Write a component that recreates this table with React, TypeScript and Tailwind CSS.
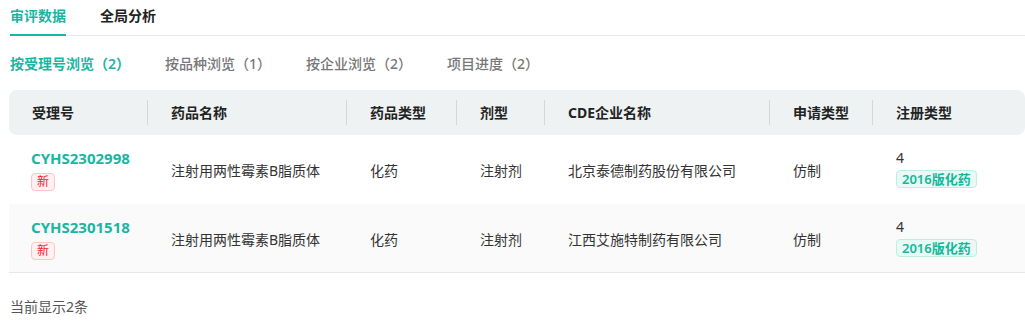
import React, { useState } from "react"

interface Row {
  code: string
  name: string
  drugType: string
  form: string
  company: string
  applyType: string
  regType: string
  regTag: string
}

const rows: Row[] = [
  {
    code: "CYHS2302998",
    name: "注射用两性霉素B脂质体",
    drugType: "化药",
    form: "注射剂",
    company: "北京泰德制药股份有限公司",
    applyType: "仿制",
    regType: "4",
    regTag: "2016版化药",
  },
  {
    code: "CYHS2301518",
    name: "注射用两性霉素B脂质体",
    drugType: "化药",
    form: "注射剂",
    company: "江西艾施特制药有限公司",
    applyType: "仿制",
    regType: "4",
    regTag: "2016版化药",
  },
]

const columns = ["受理号", "药品名称", "药品类型", "剂型", "CDE企业名称", "申请类型", "注册类型"]

const gridCols = "grid grid-cols-[139px_199px_110px_88px_225px_103px_1fr]"

const subTabs = ["按受理号浏览（2）", "按品种浏览（1）", "按企业浏览（2）", "项目进度（2）"]

export default function App() {
  const [tab, setTab] = useState(0)
  const [subTab, setSubTab] = useState(0)

  return (
    <div
      className="h-[332px] w-[1025px] overflow-hidden bg-white text-sm text-[#333]"
      style={{ fontFamily: '"Noto Sans", "Noto Sans CJK SC", sans-serif' }}
    >
      {/* top tabs */}
      <div className="ml-[10px] flex h-9 gap-[34px] border-b border-[#e8e8ec]">
        {["审评数据", "全局分析"].map((t, i) => (
          <button
            key={t}
            onClick={() => setTab(i)}
            className={
              "-mb-px border-b-2 pb-[2px] text-sm font-semibold " +
              (tab === i ? "border-[#1ab5a3] text-[#1ab5a3]" : "border-transparent text-[#222]")
            }
          >
            {t}
          </button>
        ))}
      </div>

      {/* sub tabs */}
      <div className="ml-[10px] mt-[17px] flex h-[22px] items-center gap-[35px]">
        {subTabs.map((t, i) => (
          <button
            key={t}
            onClick={() => setSubTab(i)}
            className={
              "text-sm " +
              (subTab === i ? "font-semibold text-[#1ab5a3]" : "font-medium text-[#777]")
            }
          >
            {t}
          </button>
        ))}
      </div>

      {/* table */}
      <div className="ml-[9px] mt-[15px]">
        <div className={gridCols + " h-[45px] items-center rounded-lg bg-[#eef2f3]"}>
          {columns.map((c, i) => (
            <div
              key={c}
              className={
                "flex h-[25px] items-center pl-[23px] font-bold text-[#222] " +
                (i < columns.length - 1 ? "border-r border-[#d3d8db]" : "")
              }
            >
              {c}
            </div>
          ))}
        </div>

        {rows.map((r, idx) => (
          <div
            key={r.code}
            className={
              gridCols +
              " h-[69px] items-center border-b " +
              (idx % 2 === 1 ? "border-[#e8e8e8] bg-[#fafafa]" : "border-white bg-white")
            }
          >
            <div className="flex flex-col items-start pl-[22px]">
              <span className="text-[15px] font-bold leading-5 text-[#1ab5a3]">{r.code}</span>
              <span className="mt-[5px] flex h-[18px] items-center rounded-sm border border-[#ffc4c4] bg-[#fff1f0] px-[5px] text-xs text-[#f5222d]">
                新
              </span>
            </div>
            <div className="pt-[3px] pl-[23px]">{r.name}</div>
            <div className="pt-[3px] pl-[23px]">{r.drugType}</div>
            <div className="pt-[3px] pl-[23px]">{r.form}</div>
            <div className="pt-[3px] pl-[23px]">{r.company}</div>
            <div className="pt-[3px] pl-[23px]">{r.applyType}</div>
            <div className="-mt-[2px] flex flex-col items-start pl-[23px]">
              <span className="leading-5">{r.regType}</span>
              <span className="mt-[2px] flex h-[18px] items-center rounded-sm border border-[#bdeee2] bg-[#e8faf5] px-[5px] text-[13px] font-semibold text-[#14b79a]">
                {r.regTag}
              </span>
            </div>
          </div>
        ))}
      </div>

      <div className="ml-[10px] mt-[24px] text-sm text-[#555]">当前显示2条</div>
    </div>
  )
}
